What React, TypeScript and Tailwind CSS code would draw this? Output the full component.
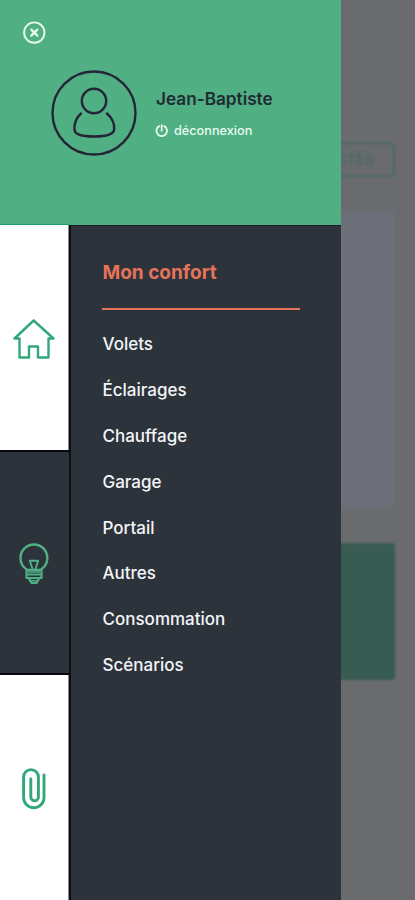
import type { ReactNode } from 'react';

const menuItems = [
    'Volets',
    'Éclairages',
    'Chauffage',
    'Garage',
    'Portail',
    'Autres',
    'Consommation',
    'Scénarios',
];

function CloseIcon() {
    return (
        <svg width="24" height="24" viewBox="0 0 24 24" fill="none" stroke="#e6fbee" strokeLinecap="round">
            <circle cx="12.3" cy="11.6" r="10.2" strokeWidth="1.9" />
            <path d="M9.3 8.6l6 6M15.3 8.6l-6 6" strokeWidth="2.3" />
        </svg>
    );
}

function AvatarIcon() {
    return (
        <svg width="86" height="86" viewBox="0 0 86 86" fill="none" stroke="#242536" strokeWidth="2.4" strokeLinecap="round">
            <circle cx="43" cy="43" r="41.5" />
            <circle cx="43" cy="31" r="12.2" />
            <path d="M30 43.5C25.5 47.5 23 54 23.5 60C24 64.5 32 66.5 43 66.5C54 66.5 62.5 64.5 63.2 59.5C63.7 53.5 60.5 47.5 56 43.5" />
        </svg>
    );
}

function PowerIcon() {
    return (
        <svg width="14" height="14" viewBox="0 0 14 14" fill="none" stroke="#e6fbee" strokeWidth="1.8" strokeLinecap="round">
            <path d="M4.2 2.1A5.3 5.3 0 1 0 9.2 2.1" />
            <path d="M6.7 1.2V6.8" />
        </svg>
    );
}

function HouseIcon() {
    return (
        <svg width="42" height="40" viewBox="0 0 42 40" fill="none" stroke="#31a77a" strokeWidth="2.4" strokeLinejoin="round">
            <path d="M20.7 1.5L1.5 19.5H6.5V38.5H16V27.5H25V38.5H35.5V19.5H40.5Z" />
        </svg>
    );
}

function BulbIcon() {
    return (
        <svg width="30" height="42" viewBox="0 0 30 42" fill="none" stroke="#4fb083" strokeWidth="2.4" strokeLinejoin="round">
            <path d="M8 26.5C3.5 24 1.5 19.5 1.5 15C1.5 7.5 7.5 1.5 15 1.5C22.5 1.5 28.3 7.5 28.3 15C28.3 19.5 26 24 22 26.5" />
            <path d="M13.5 26L10.8 17.8H19.2L16.5 26" strokeWidth="1.9" />
            <path d="M7.5 26.8H22.5V35H7.5ZM7.5 31.5H22.5M9.5 35L12.5 40H17.5L20.5 35" strokeWidth="2.2" />
            <path d="M9 29H21M12 37.8H18" strokeWidth="1.6" />
        </svg>
    );
}

function ClipIcon() {
    return (
        <svg width="24" height="42" viewBox="0 0 24 42" fill="none" stroke="#31a77a" strokeWidth="2.9" strokeLinecap="round">
            <path d="M22 7V29.5A10.2 10.2 0 0 1 1.6 29.5V9A7.4 7.4 0 0 1 16.4 9V29A3.8 3.8 0 0 1 8.8 29V11" />
        </svg>
    );
}

function Tab({ active, children }: { active?: boolean; children: ReactNode }) {
    return (
        <button
            className={`flex h-[225px] w-full items-center justify-center pt-[2px] ${active ? 'border-y-2 border-[#08090c] bg-[#2d333b] pr-px' : 'border-r border-[#888] bg-white'}`}
        >
            {children}
        </button>
    );
}

export default function App() {
    return (
        <div className="relative h-[900px] w-[415px] overflow-hidden bg-[#696b6f] font-['Inter',sans-serif]">
            {/* Dimmed page */}
            <main className="flex flex-col items-end pt-[142px] pr-[20px] blur-[0.8px]">
                <div className="flex h-[35px] w-[180px] items-center justify-end rounded-[5px] border-2 border-[#4d6a63] pr-[19px] text-[14px] font-bold tracking-wide text-[#4d6a63]">
                    ACTIVITÉS
                </div>
                <div className="mt-[34px] h-[297px] w-[376px] rounded bg-[#6c6f77]" />
                <div className="mt-[35px] h-[137px] w-[376px] rounded-[4px] bg-[#395c52]" />
            </main>

            {/* Drawer */}
            <aside className="absolute inset-y-0 left-0 flex w-[341px] flex-col bg-[#2d333b]">
                <header className="flex h-[224px] flex-col bg-[#50af83] pt-[21px]">
                    <button className="ml-[22px] size-6">
                        <CloseIcon />
                    </button>
                    <div className="mt-[25px] ml-[51px] flex">
                        <AvatarIcon />
                        <div className="ml-[18px] pt-[17px]">
                            <p className="pl-px text-[17.2px] leading-6 font-semibold whitespace-nowrap text-[#202b34]">
                                Jean-Baptiste
                            </p>
                            <button className="mt-[11px] flex items-center gap-[5px] text-[12.7px] leading-[18px] font-medium text-[#e6fbee]">
                                <PowerIcon />
                                déconnexion
                            </button>
                        </div>
                    </div>
                </header>
                <div className="flex h-px bg-[#50af83]">
                    <div className="w-[69px] bg-[#20a06f]" />
                </div>

                <div className="flex flex-1">
                    <nav className="w-[71px] border-r-2 border-[#0d0e13]">
                        <Tab>
                            <HouseIcon />
                        </Tab>
                        <Tab active>
                            <BulbIcon />
                        </Tab>
                        <Tab>
                            <ClipIcon />
                        </Tab>
                    </nav>
                    <section className="flex-1 border-t border-[#1c1c29] pt-[34px] pl-[31px]">
                        <h2 className="pl-[0.5px] text-[19px] leading-[26px] font-bold text-[#e5735a]">Mon confort</h2>
                        <div className="mt-[21.5px] h-[2px] w-[198px] bg-[#e5735a]" />
                        <ul className="mt-[12.5px] pl-[0.5px]">
                            {menuItems.map((item) => (
                                <li key={item} className="flex h-[45.85px] items-center text-[17px] font-medium text-[#f3f5f7]">
                                    {item}
                                </li>
                            ))}
                        </ul>
                    </section>
                </div>
            </aside>
        </div>
    );
}
